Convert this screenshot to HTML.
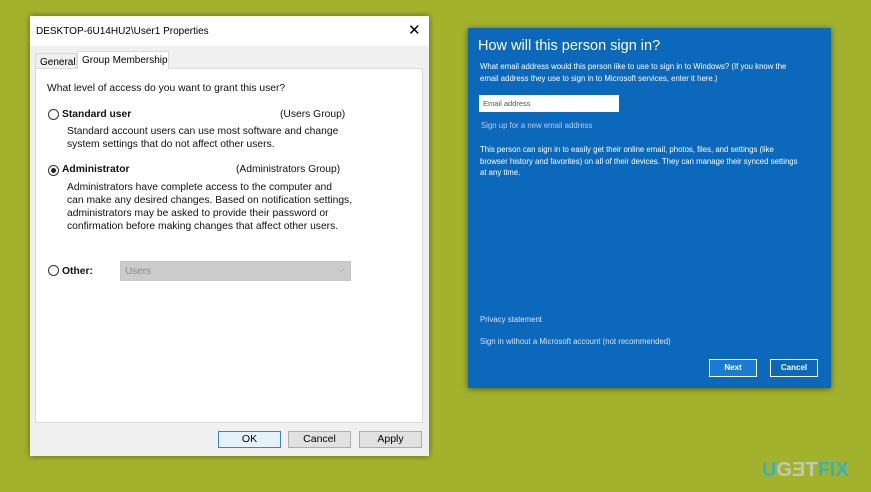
<!DOCTYPE html>
<html><head><style>
*{margin:0;padding:0;box-sizing:border-box}
body{width:871px;height:492px;background:#a3b22c;position:relative;overflow:hidden;font-family:"Liberation Sans",sans-serif}
.a{position:absolute;white-space:nowrap}
#dlg{position:absolute;left:30px;top:16px;width:399px;height:440px;background:#f0f0f0;box-shadow:0 0 6px rgba(0,0,0,.45)}
#tb{position:absolute;left:0;top:0;width:399px;height:30px;background:#fff;font-size:10px;color:#000}
.panel{position:absolute;left:5px;top:52px;width:388px;height:355px;background:#fff;border:1px solid #dadada}
.t{font-size:10.3px;color:#111}
.rad{position:absolute;width:11px;height:11px;border:1px solid #333;border-radius:50%;background:#fff}
.btn{position:absolute;top:415px;height:17px;width:63px;background:#e1e1e1;border:1px solid #adadad;font-size:10.5px;text-align:center;line-height:15px}
#blue{position:absolute;left:468px;top:28px;width:363px;height:360px;background:#0c68bb;box-shadow:0 1px 6px rgba(0,0,0,.5);color:#fff}
.w{font-size:7.8px;color:#fff;line-height:11.5px}
.bb{position:absolute;top:331px;height:18px;width:48px;border:1px solid #fff;font-size:8px;font-weight:bold;text-align:center;line-height:16px}
</style></head><body>
<div id="dlg">
 <div id="tb"><div class="a" style="left:6px;top:10px">DESKTOP-6U14HU2\User1 Properties</div><div class="a" style="left:378px;top:5px;font-size:15px">✕</div></div>
 <div class="a" style="left:5px;top:37px;width:42px;height:16px;background:#f0f0f0;border:1px solid #d9d9d9;font-size:10px;padding:3px 0 0 4px">General</div>
 <div class="a" style="left:47px;top:35px;width:92px;height:18px;background:#fff;border:1px solid #d9d9d9;border-bottom:none;font-size:10px;padding:3px 0 0 4px;z-index:2">Group Membership</div>
 <div class="panel"></div>
 <div class="a t" style="left:17px;top:67px">What level of access do you want to grant this user?</div>
 <div class="rad" style="left:18px;top:93px"></div>
 <div class="a t" style="left:32px;top:93px;font-weight:bold">Standard user</div>
 <div class="a t" style="left:250px;top:93px">(Users Group)</div>
 <div class="a t" style="left:37px;top:109px;line-height:13px">Standard account users can use most software and change<br>system settings that do not affect other users.</div>
 <div class="rad" style="left:18px;top:149px"></div><div class="a" style="left:21px;top:152px;width:5px;height:5px;border-radius:50%;background:#222"></div>
 <div class="a t" style="left:32px;top:148px;font-weight:bold">Administrator</div>
 <div class="a t" style="left:206px;top:148px">(Administrators Group)</div>
 <div class="a t" style="left:37px;top:165px;line-height:13px">Administrators have complete access to the computer and<br>can make any desired changes. Based on notification settings,<br>administrators may be asked to provide their password or<br>confirmation before making changes that affect other users.</div>
 <div class="rad" style="left:18px;top:249px"></div>
 <div class="a t" style="left:32px;top:250px;font-weight:bold">Other:</div>
 <div class="a" style="left:90px;top:245px;width:231px;height:20px;background:#ccc;border:1px solid #c4c4c4;font-size:10px;color:#888;padding:4px 0 0 4px">Users<span style="position:absolute;right:5px;top:2px;color:#999">⌵</span></div>
 <div class="btn" style="left:188px;border:1px solid #3c83d0;background:#e5f1fb">OK</div>
 <div class="btn" style="left:258px">Cancel</div>
 <div class="btn" style="left:329px">Apply</div>
</div>
<div id="blue">
 <div class="a" style="left:10px;top:10px;font-size:14.5px">How will this person sign in?</div>
 <div class="a w" style="left:12px;top:33px">What email address would this person like to use to sign in to Windows? (If you know the<br>email address they use to sign in to Microsoft services, enter it here.)</div>
 <div class="a" style="left:11px;top:67px;width:140px;height:17px;background:#fff;color:#555;font-size:7.5px;padding:4px 0 0 4px">Email address</div>
 <div class="a w" style="left:13px;top:92px;color:#b7cde6">Sign up for a new email address</div>
 <div class="a w" style="left:12px;top:116px">This person can sign in to easily get their online email, photos, files, and settings (like<br>browser history and favorites) on all of their devices. They can manage their synced settings<br>at any time.</div>
 <div class="a w" style="left:12px;top:286px;color:#d5e3f2">Privacy statement</div>
 <div class="a w" style="left:12px;top:308px;color:#d5e3f2">Sign in without a Microsoft account (not recommended)</div>
 <div class="bb" style="left:241px;background:#1a7bd3">Next</div>
 <div class="bb" style="left:302px">Cancel</div>
</div>
<div class="a" style="left:762px;top:459px;font-size:20px;font-weight:bold"><span style="color:#2fb3c9">U</span><span style="color:#c2c8b8">GƎT</span><span style="color:#2fb3c9">FIX</span></div>
</body></html>
